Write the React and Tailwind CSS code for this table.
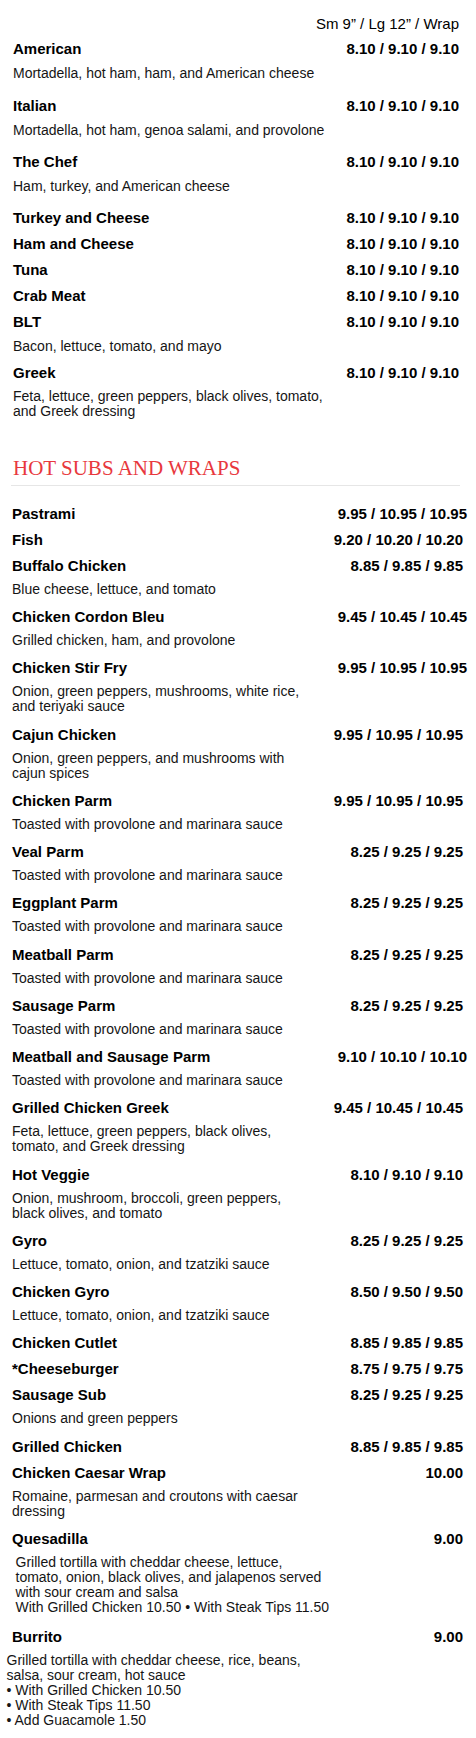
const coldSubs = [
  { name: 'American', price: '8.10 / 9.10 / 9.10', desc: ['Mortadella, hot ham, ham, and American cheese'], descClass: 'mb-[15.5px]' },
  { name: 'Italian', price: '8.10 / 9.10 / 9.10', desc: ['Mortadella, hot ham, genoa salami, and provolone'], descClass: 'mb-[15.5px]' },
  { name: 'The Chef', price: '8.10 / 9.10 / 9.10', desc: ['Ham, turkey, and American cheese'], descClass: 'mb-[14.5px]' },
  { name: 'Turkey and Cheese', price: '8.10 / 9.10 / 9.10' },
  { name: 'Ham and Cheese', price: '8.10 / 9.10 / 9.10' },
  { name: 'Tuna', price: '8.10 / 9.10 / 9.10' },
  { name: 'Crab Meat', price: '8.10 / 9.10 / 9.10' },
  { name: 'BLT', price: '8.10 / 9.10 / 9.10', desc: ['Bacon, lettuce, tomato, and mayo'], descClass: 'mb-[10.5px]' },
  {
    name: 'Greek',
    price: '8.10 / 9.10 / 9.10',
    desc: ['Feta, lettuce, green peppers, black olives, tomato,', 'and Greek dressing'],
    descClass: '-mt-[1px]',
  },
];

const toasted = ['Toasted with provolone and marinara sauce'];

const hotSubs = [
  { name: 'Pastrami', price: '9.95 / 10.95 / 10.95', shift: true },
  { name: 'Fish', price: '9.20 / 10.20 / 10.20' },
  { name: 'Buffalo Chicken', price: '8.85 / 9.85 / 9.85', desc: ['Blue cheese, lettuce, and tomato'] },
  { name: 'Chicken Cordon Bleu', price: '9.45 / 10.45 / 10.45', shift: true, desc: ['Grilled chicken, ham, and provolone'] },
  {
    name: 'Chicken Stir Fry',
    price: '9.95 / 10.95 / 10.95',
    shift: true,
    desc: ['Onion, green peppers, mushrooms, white rice,', 'and teriyaki sauce'],
  },
  {
    name: 'Cajun Chicken',
    price: '9.95 / 10.95 / 10.95',
    desc: ['Onion, green peppers, and mushrooms with', 'cajun spices'],
  },
  { name: 'Chicken Parm', price: '9.95 / 10.95 / 10.95', desc: toasted },
  { name: 'Veal Parm', price: '8.25 / 9.25 / 9.25', desc: toasted },
  { name: 'Eggplant Parm', price: '8.25 / 9.25 / 9.25', desc: toasted },
  { name: 'Meatball Parm', price: '8.25 / 9.25 / 9.25', desc: toasted },
  { name: 'Sausage Parm', price: '8.25 / 9.25 / 9.25', desc: toasted },
  { name: 'Meatball and Sausage Parm', price: '9.10 / 10.10 / 10.10', shift: true, desc: toasted },
  {
    name: 'Grilled Chicken Greek',
    price: '9.45 / 10.45 / 10.45',
    desc: ['Feta, lettuce, green peppers, black olives,', 'tomato, and Greek dressing'],
  },
  {
    name: 'Hot Veggie',
    price: '8.10 / 9.10 / 9.10',
    desc: ['Onion, mushroom, broccoli, green peppers,', 'black olives, and tomato'],
  },
  { name: 'Gyro', price: '8.25 / 9.25 / 9.25', desc: ['Lettuce, tomato, onion, and tzatziki sauce'] },
  { name: 'Chicken Gyro', price: '8.50 / 9.50 / 9.50', desc: ['Lettuce, tomato, onion, and tzatziki sauce'] },
  { name: 'Chicken Cutlet', price: '8.85 / 9.85 / 9.85' },
  { name: '*Cheeseburger', price: '8.75 / 9.75 / 9.75' },
  { name: 'Sausage Sub', price: '8.25 / 9.25 / 9.25', desc: ['Onions and green peppers'] },
  { name: 'Grilled Chicken', price: '8.85 / 9.85 / 9.85' },
  {
    name: 'Chicken Caesar Wrap',
    price: '10.00',
    desc: ['Romaine, parmesan and croutons with caesar', 'dressing'],
  },
  {
    name: 'Quesadilla',
    price: '9.00',
    desc: [
      'Grilled tortilla with cheddar cheese, lettuce,',
      'tomato, onion, black olives, and jalapenos served',
      'with sour cream and salsa',
      'With Grilled Chicken 10.50 • With Steak Tips 11.50',
    ],
    descClass: '-mt-[1px] mb-[13.5px] pl-[3.5px]',
  },
  {
    name: 'Burrito',
    price: '9.00',
    desc: [
      'Grilled tortilla with cheddar cheese, rice, beans,',
      'salsa, sour cream, hot sauce',
      '• With Grilled Chicken 10.50',
      '• With Steak Tips 11.50',
      '• Add Guacamole 1.50',
    ],
    descClass: '-mt-[1px] -ml-[5.5px]',
  },
];

const MenuItem = ({ item, defaultDesc }) => (
  <div>
    <div className="flex justify-between items-start text-[15px] leading-[17px] font-bold text-black mb-[9px]">
      <span>{item.name}</span>
      <span className={item.shift ? '-mr-[4px]' : ''}>{item.price}</span>
    </div>
    {item.desc && (
      <p className={`text-[14px] leading-[15px] text-[#151515] whitespace-nowrap ${item.descClass || defaultDesc}`}>
        {item.desc.map((line, i) => (
          <span key={i} className="block">
            {line}
          </span>
        ))}
      </p>
    )}
  </div>
);

export default function App() {
  return (
    <div className="w-[476px] min-h-[1738px] bg-white pt-[15px] pb-[10px] font-['Liberation_Sans',Arial,sans-serif] text-black">
      {/* Cold subs */}
      <section className="pl-[13px] pr-[17px]">
        <div className="text-right text-[15px] leading-[17px] mb-[8px]">Sm 9” / Lg 12” / Wrap</div>
        {coldSubs.map((item) => (
          <MenuItem key={item.name} item={item} defaultDesc="mb-[15.5px]" />
        ))}
      </section>

      {/* Hot subs */}
      <section>
        <h2 className="mt-[36.5px] ml-[11px] mr-[16px] pl-[2px] pb-[5.5px] border-b border-[#e6e6e6] font-['Liberation_Serif','Times_New_Roman',serif] text-[21px] leading-[24px] font-normal text-[#e8383d]">
          HOT SUBS AND WRAPS
        </h2>
        <div className="pl-[12px] pr-[13px] mt-[18.75px]">
          {hotSubs.map((item) => (
            <MenuItem key={item.name} item={item} defaultDesc="-mt-[1px] mb-[11.25px]" />
          ))}
        </div>
      </section>
    </div>
  );
}
